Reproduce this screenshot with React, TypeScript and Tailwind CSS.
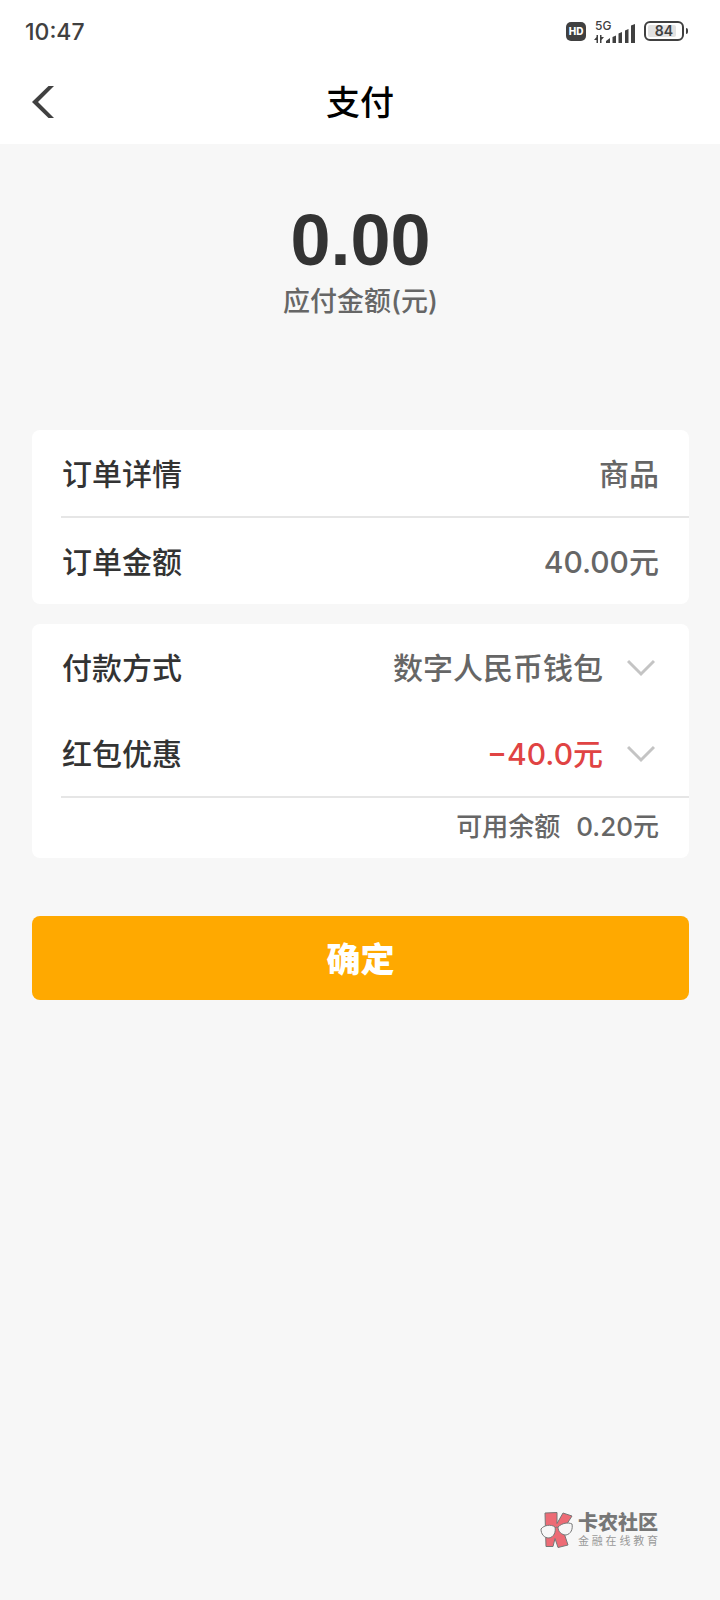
import type { ReactNode } from 'react'

function StatusBar() {
  return (
    <div className="flex h-[62px] items-center justify-between pl-[25px] pr-8 text-[#404040]">
      <time className="pt-px text-[23px] leading-8 font-medium">10:47</time>
      <div className="flex items-center gap-2">
        <span className="flex h-[19px] w-5 items-center justify-center rounded-[5px] bg-[#404040] text-[10px] font-extrabold text-white">
          HD
        </span>
        <svg width="42" height="28" viewBox="0 -4 42 28" fill="currentColor" role="img" aria-label="5G">
          <text x="1" y="9" fontSize="12" fontWeight="500">5G</text>
          <path d="M4 14v8H2.500v-3H0l2.500-3v-2zM6 22v-8h1.500v2H10l-2.500 3v3z" />
          <path d="M12 22v-2l4-3v5zM18.500 22v-6l3.500-1.500V22zM24.500 22v-9.500L28 11v11zM31 22V9.500L34.500 8v14zM37 22V4.500L41 3v19z" />
        </svg>
        <div className="flex items-center gap-[2px]">
          <div className="flex h-5 w-10 rounded-[6px] border-2 border-[#404040] p-[2px]">
            <span className="flex w-7 items-center justify-center rounded-[2px] bg-[#e2e2e2] pl-1 text-[14px] leading-none font-semibold">
              84
            </span>
          </div>
          <span className="h-[6px] w-[2px] rounded-r bg-[#404040]" />
        </div>
      </div>
    </div>
  )
}

function Header() {
  return (
    <header className="grid h-[82px] grid-cols-[1fr_auto_1fr] items-center px-8">
      <button type="button" aria-label="返回" className="justify-self-start pb-0.5 text-[#404040]">
        <svg width="22" height="32" viewBox="0 0 22 32" fill="currentColor">
          <path d="M16.500 0H22L6 16l16 16h-5.500L0 16z" />
        </svg>
      </button>
      <h1 className="text-[34px] leading-10 font-medium text-black">支付</h1>
    </header>
  )
}

function Chevron() {
  return (
    <svg width="28" height="18" viewBox="0 0 28 18" fill="none" stroke="#c4c4c4" strokeWidth="3" className="mr-1 ml-6">
      <path d="M1 2l13 13L27 2" />
    </svg>
  )
}

function Row({ label, children }: { label: string; children: ReactNode }) {
  return (
    <div className="flex h-[86px] items-center justify-between pt-0.5 pr-[30px] pl-[30px] text-[30px] leading-10 font-medium">
      <span className="text-[#333]">{label}</span>
      {children}
    </div>
  )
}

function Divider() {
  return <hr className="ml-[29px] h-[2px] border-0 bg-[#e6e6e6]" />
}

function Watermark() {
  return (
    <footer className="mt-auto flex items-center justify-end gap-1 pr-[62px] pb-[52px]">
      <svg width="34" height="36" viewBox="0 0 34 36" stroke="#777" strokeWidth="1" strokeLinejoin="round">
        <path d="M5 1l12-.5v11L23 1l9 3-9 14 5 15-10 2.500-3-9-2 8H6z" fill="#ed6b75" />
        <path d="M1 17c3-4 10-5 14-2 1 5-1 10-6 11-5 0-8-4-8-9zM18 15c4-4 10-5 14-3 1 5-1 10-6 11-4 0-8-3-8-8z" fill="#f7f7f7" />
        <path d="M15 16c1-1 2-1 3-.5" fill="none" />
      </svg>
      <div>
        <p className="text-[20px] leading-[22px] font-black text-[#777]">卡农社区</p>
        <p className="flex justify-between text-[11px] leading-[14px] text-[#999]">
          {[...'金融在线教育'].map((c) => (
            <span key={c}>{c}</span>
          ))}
        </p>
      </div>
    </footer>
  )
}

export default function App() {
  return (
    <div
      lang="zh-CN"
      className="flex min-h-screen flex-col bg-[#f7f7f7] font-['Inter','Noto_Sans_CJK_SC',sans-serif]"
    >
      <div className="bg-white">
        <StatusBar />
        <Header />
      </div>

      <main className="pr-[31px] pl-8">
        <section className="pt-[60px] text-center">
          <p className="font-['Liberation_Sans',sans-serif] text-[72px] leading-[72px] font-bold text-[#333]">0.00</p>
          <p className="mt-1.5 text-[27px] leading-10 font-medium text-[#666]">应付金额(元)</p>
        </section>

        <section className="mt-[108px] rounded-lg bg-white">
          <Row label="订单详情">
            <span className="text-[#666]">商品</span>
          </Row>
          <Divider />
          <Row label="订单金额">
            <span className="text-[#666]">40.00元</span>
          </Row>
        </section>

        <section className="mt-5 rounded-lg bg-white">
          <Row label="付款方式">
            <button type="button" className="flex items-center text-[#666]">
              数字人民币钱包
              <Chevron />
            </button>
          </Row>
          <Row label="红包优惠">
            <button type="button" className="flex items-center text-[#e04343]">
              −40.0元
              <Chevron />
            </button>
          </Row>
          <Divider />
          <p className="flex h-[60px] items-center justify-end gap-4 pr-[30px] pb-0.5 text-[26px] leading-10 font-medium text-[#666]">
            <span>可用余额</span>
            <span>0.20元</span>
          </p>
        </section>

        <button
          type="button"
          className="mt-[58px] h-[84px] w-full rounded-lg bg-[#ffa900] pt-1 text-[34px] leading-10 font-black text-white"
        >
          确定
        </button>
      </main>

      <Watermark />
    </div>
  )
}
